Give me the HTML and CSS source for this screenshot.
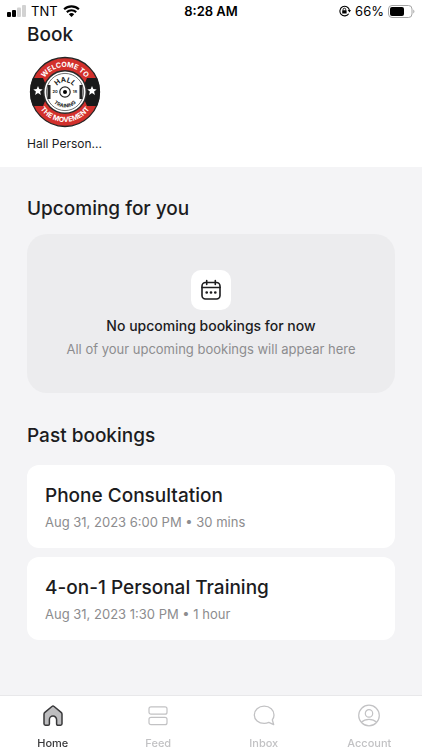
FILE: index.html
```html
<!DOCTYPE html>
<html lang="en">
<head>
    <meta charset="utf-8">
    <meta name="viewport" content="width=device-width, initial-scale=1.0">
    <title>Home</title>
    <link rel="stylesheet" href="styles.css">
</head>
<body>
    <header class="top">
        <div class="status-bar">
            <div class="status-left">
                <svg width="19" height="12" viewBox="0 0 19 12">
                    <rect x="0" y="7" width="4" height="5" rx="1"/>
                    <rect x="5" y="5" width="4" height="7" rx="1"/>
                    <rect x="10" y="2.5" width="4" height="9.5" rx="1" fill="#d2d2d2"/>
                    <rect x="15" y="0" width="4" height="12" rx="1" fill="#d2d2d2"/>
                </svg>
                <span>TNT</span>
                <svg width="17" height="12" viewBox="0 0 17 12">
                    <path d="M1.1 4.3a10.8 10.8 0 0 1 14.8 0M3.8 7.1a7 7 0 0 1 9.4 0" fill="none" stroke="#000" stroke-width="2.1"/>
                    <path d="M5.8 9.2a4 4 0 0 1 5.4 0L8.5 12z"/>
                </svg>
            </div>
            <span class="clock">8:28 AM</span>
            <div class="status-right">
                <svg width="12" height="12" viewBox="0 0 12 12">
                    <path d="M9.7 8.8A4.8 4.8 0 1 1 10.4 5" fill="none" stroke="#000" stroke-width="1.1"/>
                    <path d="M8.7 5h3.3l-1.5 2.5z"/>
                    <rect x="3.2" y="5.2" width="4.4" height="3.3" rx=".5"/>
                    <path d="M4.1 5.4V4.5a1.3 1.3 0 0 1 2.6 0v.9" fill="none" stroke="#000" stroke-width=".9"/>
                </svg>
                <span>66%</span>
                <svg width="27" height="13" viewBox="0 0 27 13">
                    <rect x=".5" y=".5" width="23.5" height="12" rx="3.5" fill="none" stroke="#a5a5a5"/>
                    <rect x="2" y="2" width="14" height="9" rx="2"/>
                    <path d="M25.3 4.5a2.4 2.4 0 0 1 0 4z" fill="#a5a5a5"/>
                </svg>
            </div>
        </div>
        <h2>Book</h2>
        <a class="trainer" href="#">
            <svg width="72" height="72" viewBox="0 0 72 72">
                <defs>
                    <path id="arcTop" d="M11 36a25 25 0 0 1 50 0"/>
                    <path id="arcBottom" d="M6 36a30 30 0 0 0 60 0"/>
                    <path id="arcHall" d="M26 36a10 10 0 0 1 20 0"/>
                    <path id="arcTraining" d="M20.5 36a15.5 15.5 0 0 0 31 0"/>
                </defs>
                <circle cx="36" cy="36" r="34.5" fill="#d2302c" stroke="#252525" stroke-width="1.3"/>
                <path d="M4 22h10l3 7v14l-3 7H4a35 35 0 0 1 0-28zM68 22H58l-3 7v14l3 7h10a35 35 0 0 0 0-28z" fill="#191919"/>
                <circle cx="36" cy="36" r="21.3" fill="#fff" stroke="#292929" stroke-width="1.5"/>
                <circle cx="36" cy="36" r="18.6" fill="none" stroke="#333" stroke-width=".7"/>
                <path d="M20 29v14M52 29v14" stroke="#222" stroke-width="3"/>
                <circle cx="36" cy="36" r="5.2" fill="#fff" stroke="#222" stroke-width="1.2"/>
                <circle cx="36" cy="36" r="2" />
                <path d="M9 30l1.3 3.1 3.4.3-2.6 2.2.8 3.3L9 37.1l-2.9 1.8.8-3.3-2.6-2.2 3.4-.3z" fill="#fff"/>
                <path d="M63 30l1.3 3.1 3.4.3-2.6 2.2.8 3.3-2.9-1.8-2.9 1.8.8-3.3-2.6-2.2 3.4-.3z" fill="#fff"/>
                <text class="logo-ring"><textPath href="#arcTop" startOffset="50%">WELCOME TO</textPath></text>
                <text class="logo-ring"><textPath href="#arcBottom" startOffset="50%">THE MOVEMENT</textPath></text>
                <text class="logo-hall"><textPath href="#arcHall" startOffset="50%">HALL</textPath></text>
                <text class="logo-training"><textPath href="#arcTraining" startOffset="50%">TRAINING</textPath></text>
                <text class="logo-year" x="26" y="37">20</text>
                <text class="logo-year" x="46" y="37">18</text>
            </svg>
            <span class="trainer-name">Hall Person...</span>
        </a>
    </header>

    <main>
        <h2>Upcoming for you</h2>
        <section class="empty">
            <div class="empty-icon">
                <svg width="20" height="22" viewBox="0 0 20 22" fill="none" stroke="#1c1c1e" stroke-width="1.6" stroke-linecap="round">
                    <rect x="1" y="3.5" width="18" height="16.5" rx="3.5"/>
                    <path d="M1 8.5h18M5.7 1.5v4M14.3 1.5v4"/>
                    <path d="M5.7 13.5h.01M10 13.5h.01M14.3 13.5h.01" stroke-width="2.7"/>
                </svg>
            </div>
            <p class="empty-title">No upcoming bookings for now</p>
            <p class="empty-text">All of your upcoming bookings will appear here</p>
        </section>

        <h2>Past bookings</h2>
        <a class="booking" href="#">
            <h3>Phone Consultation</h3>
            <p>Aug 31, 2023 6:00 PM • 30 mins</p>
        </a>
        <a class="booking" href="#">
            <h3>4-on-1 Personal Training</h3>
            <p>Aug 31, 2023 1:30 PM • 1 hour</p>
        </a>
    </main>

    <nav class="tabs">
        <a class="tab active" href="#">
            <svg width="24" height="24" viewBox="0 0 24 24" fill="#bdbdbf" stroke="#38383a" stroke-width="1.5" stroke-linejoin="round">
                <path d="M3 10.2c0-.8.3-1.4.9-1.9l7-5.8c.7-.5 1.5-.5 2.2 0l7 5.8c.6.5.9 1.1.9 1.9v9.6c0 .9-.5 1.4-1.4 1.4h-2.7c-.8 0-1.3-.5-1.3-1.3v-4.2a3.6 3.6 0 0 0-7.2 0v4.2c0 .8-.5 1.3-1.3 1.3H4.4c-.9 0-1.4-.5-1.4-1.4z"/>
            </svg>
            <span>Home</span>
        </a>
        <a class="tab" href="#">
            <svg width="24" height="24" viewBox="0 0 24 24" fill="none" stroke="#c2c2c4" stroke-width="1.2">
                <rect x="3" y="2.8" width="18" height="7.4" rx="2"/>
                <rect x="3" y="13.3" width="18" height="7.4" rx="2"/>
            </svg>
            <span>Feed</span>
        </a>
        <a class="tab" href="#">
            <svg width="24" height="24" viewBox="0 0 24 24" fill="none" stroke="#c2c2c4" stroke-width="1.3" stroke-linejoin="round">
                <path d="M16.8 18.4a11.2 11.2 0 0 1-4.6 1C6.5 19.4 2.3 15.7 2.3 10.9S6.5 2.2 12.2 2.2s9.8 3.9 9.8 8.7c0 1.9-.6 3.5-1.7 4.9l1.4 4.9z"/>
            </svg>
            <span>Inbox</span>
        </a>
        <a class="tab" href="#">
            <svg width="24" height="24" viewBox="0 0 24 24" fill="none" stroke="#c2c2c4" stroke-width="1.2">
                <circle cx="12" cy="11.5" r="10.3"/>
                <circle cx="12" cy="9.4" r="3.7"/>
                <path d="M4.3 18.3c4-4 11.4-4 15.4 0"/>
            </svg>
            <span>Account</span>
        </a>
    </nav>
</body>
</html>
```
FILE: styles.css
```css
* {
    box-sizing: border-box;
}

body {
    display: flex;
    flex-direction: column;
    min-height: 100vh;
    margin: 0;
    font-family: Inter, sans-serif;
    color: #1c1c1e;
    background: #f4f4f6;
}

a {
    color: inherit;
    text-decoration: none;
}

svg {
    display: block;
}

h2, h3, p {
    margin: 0;
}

h2, h3 {
    font-size: 19px;
    line-height: 25px;
    font-weight: 500;
}

.top {
    background: #fff;
    padding: 0 27px 14px;
}

.status-bar {
    display: grid;
    grid-template-columns: 1fr auto 1fr;
    align-items: center;
    height: 22px;
    margin: 0 -20px;
    font-size: 13px;
    color: #000;
}

.status-left, .status-right {
    display: flex;
    align-items: center;
    gap: 5px;
}

.status-right {
    justify-content: flex-end;
    gap: 4px;
}

.clock {
    font-weight: 600;
}

.trainer {
    display: block;
    width: 76px;
    margin-top: 9px;
}

.trainer svg {
    margin: 0 auto;
}

.trainer-name {
    display: block;
    margin-top: 6px;
    font-size: 12px;
    line-height: 19px;
    white-space: nowrap;
}

.logo-ring, .logo-hall, .logo-training, .logo-year {
    font-weight: 700;
    text-anchor: middle;
    fill: #222;
}

.logo-ring {
    font-size: 7px;
    fill: #fff;
}

.logo-hall {
    font-size: 7px;
}

.logo-training {
    font-size: 5px;
}

.logo-year {
    font-size: 4px;
}

main {
    flex: 1;
    padding: 29px 27px 20px;
}

.empty {
    display: flex;
    flex-direction: column;
    align-items: center;
    margin: 13px 0 30px;
    padding: 36px 16px 33px;
    border-radius: 20px;
    background: #ececee;
}

.empty-icon {
    display: flex;
    align-items: center;
    justify-content: center;
    width: 40px;
    height: 40px;
    margin-bottom: 4px;
    border-radius: 10px;
    background: #fff;
}

.empty-title {
    font-size: 14px;
    line-height: 24px;
    font-weight: 500;
}

.empty-text {
    font-size: 13px;
    line-height: 22px;
    color: #8c8c8e;
}

.booking {
    display: block;
    margin-top: 9px;
    padding: 18px 18px 16px;
    border-radius: 12px;
    background: #fff;
}

h2 + .booking {
    margin-top: 17px;
}

.booking p {
    margin-top: 5px;
    font-size: 13px;
    line-height: 19px;
    color: #8c8c8e;
}

.tabs {
    position: sticky;
    bottom: 0;
    display: grid;
    grid-template-columns: repeat(4, 1fr);
    height: 55px;
    border-top: 1px solid #e8e8ea;
    background: #fff;
}

.tab {
    display: flex;
    flex-direction: column;
    align-items: center;
    gap: 7px;
    padding-top: 8px;
    font-size: 11px;
    line-height: 16px;
    font-weight: 500;
    color: #c2c2c4;
}

.tab.active {
    color: #38383a;
}
```
